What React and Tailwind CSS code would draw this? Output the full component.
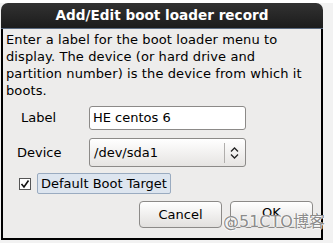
import React from "react";

export default function App() {
  return (
    <div className="relative w-[333px] h-[243px] bg-[#f2f2f2] overflow-hidden" style={{ fontFamily: '"DejaVu Sans", sans-serif' }}>
      <div className="h-[3px] bg-white" />
      <div className="ml-[1px] w-[322px] flex flex-col">
        <div className="h-[26px] rounded-t-[7px] bg-gradient-to-b from-[#323232] to-[#1c1c1c] border-b border-[#5a6a80] flex items-center justify-center">
          <span className="text-white font-bold text-[13.6px] leading-none">Add/Edit boot loader record</span>
        </div>
        <div className="h-[211px] bg-[#edeceb] border-x-2 border-b-2 border-black pl-[3px] pt-[2px] text-[13px] text-black">
          <p className="leading-[17px] whitespace-nowrap tracking-[0.1px]">
            Enter a label for the boot loader menu to<br />
            display. The device (or hard drive and<br />
            partition number) is the device from which it<br />
            boots.
          </p>
          <div className="mt-[7px] flex items-center h-[24px]">
            <span className="w-[83px] pl-[15px]">Label</span>
            <div className="w-[157px] h-[24px] bg-white border border-[#8c8a88] rounded-[3px] flex items-center pl-[3px]">HE centos 6</div>
          </div>
          <div className="mt-[8px] flex items-center h-[29px]">
            <span className="w-[83px] pl-[11px]">Device</span>
            <div className="w-[157px] h-[29px] bg-gradient-to-b from-white to-[#e6e4e2] border border-[#8c8a88] rounded-[3px] flex items-center">
              <span className="flex-1 pl-[4px]">/dev/sda1</span>
              <div className="w-px h-[20px] bg-[#b0aeac]" />
              <svg width="20" height="14" viewBox="0 0 20 14">
                <path d="M6 5.5 L9.5 2 L13 5.5" fill="none" stroke="#222" strokeWidth="1.3" />
                <path d="M6 8.5 L9.5 12 L13 8.5" fill="none" stroke="#222" strokeWidth="1.3" />
              </svg>
            </div>
          </div>
          <div className="mt-[6px] flex items-center h-[21px]">
            <div className="ml-[13px] w-[12px] h-[12px] border border-[#555] bg-white flex items-center justify-center">
              <svg width="10" height="10" viewBox="0 0 10 10">
                <path d="M1.5 5 L4 8 L8.5 1.5" fill="none" stroke="#111" strokeWidth="1.6" />
              </svg>
            </div>
            <div className="ml-[6px] h-[21px] px-[3px] bg-[#dde5ef] border border-[#9aabc0] rounded-[2px] flex items-center">Default Boot Target</div>
          </div>
          <div className="mt-[7px] flex justify-end gap-[8px] pr-[8px]">
            <div className="w-[83px] h-[27px] rounded-[4px] border border-[#8c8a88] bg-gradient-to-b from-white to-[#e2e0de] flex items-center justify-center">Cancel</div>
            <div className="w-[83px] h-[27px] rounded-[4px] border border-[#8c8a88] bg-gradient-to-b from-white to-[#e2e0de] flex items-center justify-center pb-[4px]">OK</div>
          </div>
        </div>
      </div>
      <div
        className="absolute left-[223px] top-[214px] text-[16px] text-[#8c8c8c] leading-none"
        style={{ fontFamily: '"DejaVu Sans", "Noto Sans CJK SC", sans-serif', textShadow: "1px 0 rgba(255,255,255,0.8), -1px 0 rgba(255,255,255,0.8), 0 1px rgba(255,255,255,0.8)" }}
      >
        @51CTO博客
      </div>
    </div>
  );
}
